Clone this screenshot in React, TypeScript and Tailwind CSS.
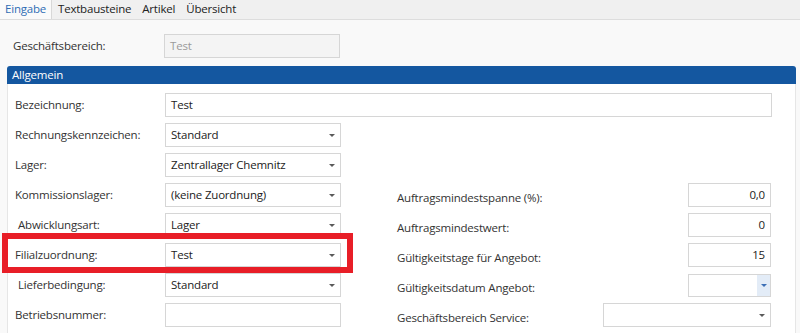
import { ReactNode } from "react";

function Arrow({ blue }: { blue?: boolean }) {
  return (
    <svg width="6" height="3" viewBox="0 0 6 3" className="shrink-0">
      <path d="M0 0h6L3 3z" fill={blue ? "#3d6fb6" : "#5a5a5a"} />
    </svg>
  );
}

function TextInput({
  value,
  width,
  align = "left",
  disabled,
}: {
  value?: string;
  width: string;
  align?: "left" | "right";
  disabled?: boolean;
}) {
  return (
    <div
      className={`flex h-[24px] shrink-0 items-center border border-[#d6d6d6] px-[5px] ${width} ${
        disabled ? "bg-[#f4f4f4] text-[#9a9a9a]" : "bg-white text-[#222]"
      } ${align === "right" ? "justify-end" : ""}`}
    >
      {value}
    </div>
  );
}

function Select({ value, width }: { value?: string; width: string }) {
  return (
    <div
      className={`flex h-[24px] shrink-0 items-center justify-between border border-[#d6d6d6] bg-white pl-[5px] pr-[5px] text-[#222] ${width}`}
    >
      <span>{value}</span>
      <Arrow />
    </div>
  );
}

function DateInput({ width }: { width: string }) {
  return (
    <div className={`flex h-[23px] shrink-0 items-stretch border border-[#d6d6d6] bg-white ${width}`}>
      <div className="flex-1" />
      <div className="flex w-[13px] items-center justify-center bg-[#e3ecf7]">
        <Arrow blue />
      </div>
    </div>
  );
}

function Row({
  label,
  indent,
  field,
  right,
}: {
  label: string;
  indent?: boolean;
  field: ReactNode;
  right?: { label: string; field: ReactNode };
}) {
  return (
    <div className="flex h-[30px] items-center">
      <div className={`w-[157px] shrink-0 text-[#333] ${indent ? "pl-[10px]" : "pl-[7px]"}`}>
        {label}
      </div>
      {field}
      {right ? (
        <>
          <div className="ml-[56px] shrink-0 pt-[5px] text-[#333]">{right.label}</div>
          <div className="ml-auto mr-[24px] shrink-0">{right.field}</div>
        </>
      ) : null}
    </div>
  );
}

export default function App() {
  return (
    <div
      className="relative h-[333px] w-[800px] overflow-hidden bg-[#f9f9f9] text-[11.5px] tracking-[-0.2px]"
      style={{ fontFamily: '"Open Sans", "Noto Sans", sans-serif' }}
    >
      {/* tab strip */}
      <div className="flex h-[20px] items-end border-b border-[#dddddd] bg-[#f0f0f0]">
        <div className="flex h-[20px] w-[51px] items-center bg-[#fafafa] pl-[5px] text-[#2f6db5]">Eingabe</div>
        <div className="flex h-[20px] items-center border-l border-[#d8d8d8] pl-[6px] pr-[11px] text-[#222]">
          Textbausteine
        </div>
        <div className="flex h-[20px] items-center pr-[11px] text-[#222]">Artikel</div>
        <div className="flex h-[20px] items-center text-[#222]">Übersicht</div>
      </div>

      <div className="mt-[15px] flex h-[22px] items-center">
        <div className="w-[164px] shrink-0 pl-[13px] text-[#333]">Geschäftsbereich:</div>
        <TextInput value="Test" width="w-[176px]" disabled />
      </div>

      <div className="ml-[7px] mr-[4px] mt-[9px]">
        <div className="flex h-[18px] items-center rounded-t-[3px] bg-[#1457a0] pl-[5px] text-white">
          Allgemein
        </div>
        <div className="h-[260px] border-l border-r border-[#e6e6e6] bg-white pt-[6px]">
          <Row label="Bezeichnung:" field={<TextInput value="Test" width="w-[607px]" />} />
          <Row label="Rechnungskennzeichen:" field={<Select value="Standard" width="w-[176px]" />} />
          <Row label="Lager:" field={<Select value="Zentrallager Chemnitz" width="w-[176px]" />} />
          <Row
            label="Kommissionslager:"
            field={<Select value="(keine Zuordnung)" width="w-[176px]" />}
            right={{ label: "Auftragsmindestspanne (%):", field: <TextInput value="0,0" align="right" width="w-[83px]" /> }}
          />
          <Row
            label="Abwicklungsart:"
            indent
            field={<Select value="Lager" width="w-[176px]" />}
            right={{ label: "Auftragsmindestwert:", field: <TextInput value="0" align="right" width="w-[83px]" /> }}
          />
          <Row
            label="Filialzuordnung:"
            field={<Select value="Test" width="w-[176px]" />}
            right={{ label: "Gültigkeitstage für Angebot:", field: <TextInput value="15" align="right" width="w-[83px]" /> }}
          />
          <Row
            label="Lieferbedingung:"
            indent
            field={<Select value="Standard" width="w-[176px]" />}
            right={{ label: "Gültigkeitsdatum Angebot:", field: <DateInput width="w-[83px]" /> }}
          />
          <Row
            label="Betriebsnummer:"
            field={<TextInput width="w-[176px]" />}
            right={{ label: "Geschäftsbereich Service:", field: <Select width="w-[168px]" /> }}
          />
          <div className="flex h-[30px] items-start pt-[7px]">
            <div className="ml-[245px] h-[24px] w-[88px] shrink-0 border border-[#d6d6d6] bg-white" />
            <div className="ml-auto mr-[24px] h-[24px] w-[168px] shrink-0 border border-[#d6d6d6] bg-white" />
          </div>
        </div>
      </div>

      {/* highlight annotation */}
      <div className="absolute left-[2px] top-[233px] h-[40px] w-[351px] border-[6px] border-[#e81e27]" />
    </div>
  );
}
